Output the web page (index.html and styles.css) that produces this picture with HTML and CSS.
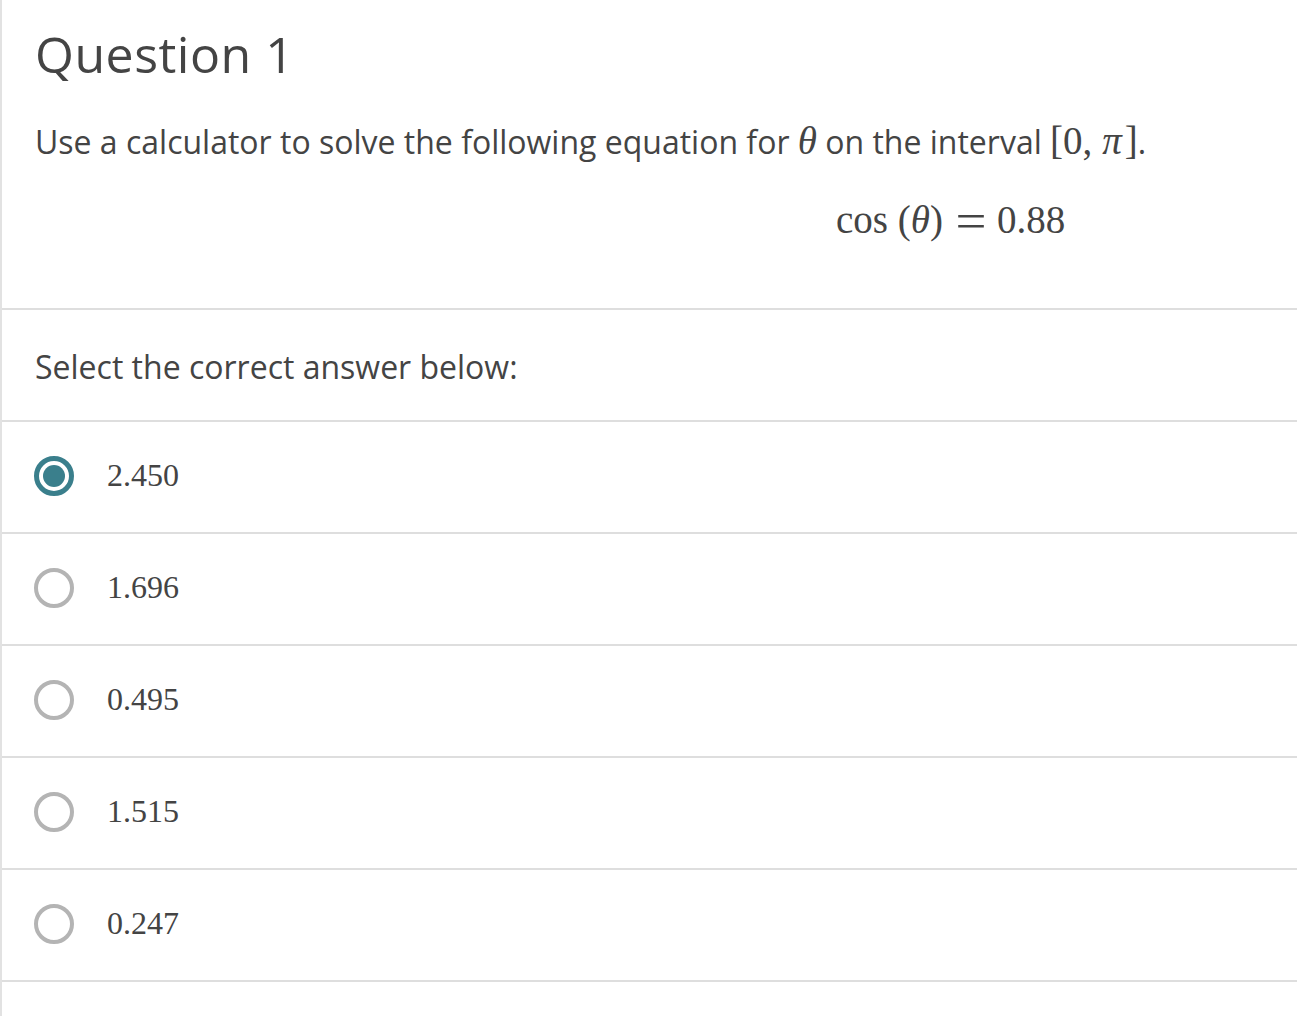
FILE: index.html
```html
<!DOCTYPE html>
<html lang="en">
<head>
    <meta charset="UTF-8">
    <title>Question 1</title>
    <link rel="stylesheet" href="styles.css">
</head>
<body>
    <div class="question">
        <div class="stem">
            <h1>Question 1</h1>
            <p class="prompt">Use a calculator to solve the following equation for <span class="math"><i>θ</i></span> on the interval <span class="math">[0,<i class="pi">π</i>]</span>.</p>
            <div class="display-math">cos&nbsp;(<i>θ</i>)<span class="eq">=</span>0.88</div>
        </div>

        <div class="row label-row">Select the correct answer below:</div>

        <div class="row option">
            <span class="radio checked"></span>
            <span class="answer">2.450</span>
        </div>
        <div class="row option">
            <span class="radio"></span>
            <span class="answer">1.696</span>
        </div>
        <div class="row option">
            <span class="radio"></span>
            <span class="answer">0.495</span>
        </div>
        <div class="row option">
            <span class="radio"></span>
            <span class="answer">1.515</span>
        </div>
        <div class="row option">
            <span class="radio"></span>
            <span class="answer">0.247</span>
        </div>
    </div>
</body>
</html>
```

FILE: styles.css
```css
body {
    margin: 0;
    padding: 0;
    background-color: white;
    color: #444;
    font-family: "Open Sans", Arial, sans-serif;
}
.question {
    border-left: 2px solid #e2e2e2;
    min-height: 1016px;
    box-sizing: border-box;
}
.stem {
    padding: 24px 0 0 33px;
    height: 310px;
    box-sizing: border-box;
    border-bottom: 2px solid #dedede;
}
h1 {
    margin: 0;
    font-size: 50px;
    font-weight: 400;
    line-height: 60px;
    letter-spacing: 0.5px;
}
.prompt {
    margin: 38px 0 0 0;
    font-size: 32px;
    line-height: 40px;
}
.math {
    font-family: "Liberation Serif", "Times New Roman", serif;
    font-size: 39px;
    line-height: 30px;
}
.pi {
    margin: 0 3px 0 10px;
}
.display-math {
    margin: 34px 0 0 801px;
    font-family: "Liberation Serif", "Times New Roman", serif;
    font-size: 39px;
    line-height: 48px;
    white-space: nowrap;
}
.eq {
    display: inline-block;
    font-size: 50px;
    line-height: 40px;
    vertical-align: top;
    transform: translateY(5px) scaleX(1.1);
    margin: 0 12px 0 14px;
}
.row {
    height: 110px;
    border-bottom: 2px solid #dedede;
    display: flex;
    align-items: center;
    padding-left: 33px;
}
.label-row {
    font-size: 32px;
    padding-top: 2px;
    box-sizing: content-box;
    height: 108px;
}
.radio {
    width: 40px;
    height: 40px;
    box-sizing: border-box;
    border: 4px solid #b4b4b4;
    border-radius: 50%;
    margin: 0 0 2px -1px;
    position: relative;
    flex-shrink: 0;
}
.radio.checked {
    border: 5px solid #3a7f8c;
}
.radio.checked::after {
    content: "";
    position: absolute;
    left: 4px;
    top: 4px;
    width: 22px;
    height: 22px;
    border-radius: 50%;
    background-color: #3a7f8c;
}
.answer {
    margin-left: 33px;
    padding-bottom: 3px;
    font-family: "Liberation Serif", "Times New Roman", serif;
    font-size: 32px;
}
```
